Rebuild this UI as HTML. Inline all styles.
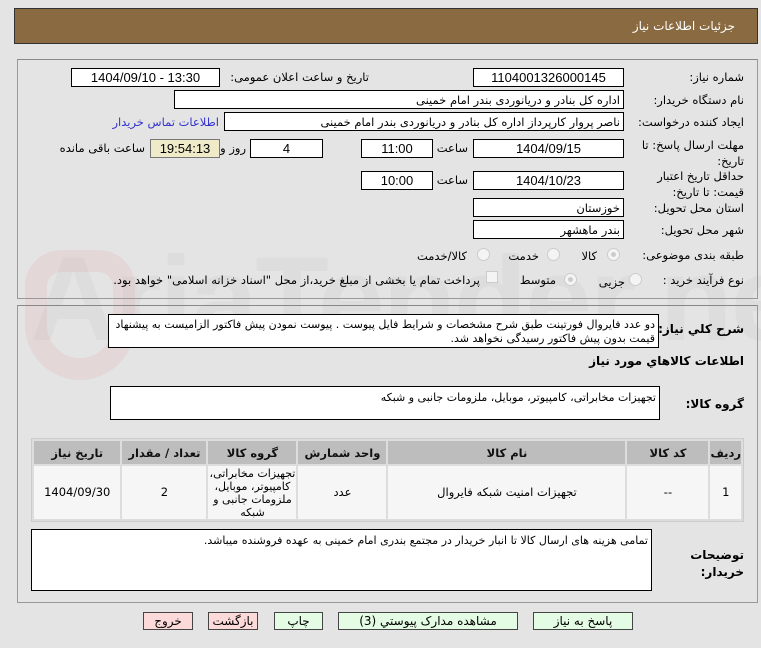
<!DOCTYPE html>
<html><head><meta charset="utf-8"><style>
*{box-sizing:border-box;margin:0;padding:0}
body{width:761px;height:648px;background:#e4e4e4;font-family:"DejaVu Sans","Noto Sans CJK SC",sans-serif;font-size:11.5px;color:#000;position:relative;overflow:hidden}
.a{position:absolute;white-space:nowrap}
.hd{left:14px;top:8px;width:744px;height:36px;background:#8a6a40;border:1px solid #333}
.hd span{position:absolute;right:22px;top:10px;color:#fff;font-size:12px}
.pn{position:absolute;border:1px solid #999;border-top-color:#888}
.in{position:absolute;background:#fff;border:1px solid #000;height:19px;text-align:center;line-height:17px;font-size:13px;font-family:"Liberation Sans",sans-serif}
.tx{position:absolute;background:#fff;border:1px solid #000;direction:rtl;text-align:right;padding:2px 3px;line-height:17px;font-size:11.5px}
.lb{position:absolute;direction:rtl;text-align:right;white-space:nowrap}
.rd{position:absolute;width:13px;height:13px;border-radius:50%;border:1px solid #ccc;background:#f4f4f4}
.rd.on::after{content:"";position:absolute;left:3px;top:3px;width:5px;height:5px;border-radius:50%;background:#ccc}
table{position:absolute;left:31px;top:438px;width:713px;height:84px;border-collapse:separate;border-spacing:2px;background:#ddd;border:1px solid #ccc;direction:rtl}
th{background:#bdbdbd;font-weight:bold;height:23px;font-size:11.5px;color:#111}
td{background:#f6f6f6;text-align:center;font-size:11.5px;line-height:13px}
.bt{position:absolute;top:612px;height:18px;border:1px solid #444;text-align:center;line-height:16px;font-size:12px;direction:rtl}
.b{font-weight:bold}
</style></head><body>
<div class="a" style="left:30px;top:230px;font-size:120px;font-weight:bold;color:rgba(190,190,190,0.18);font-family:'Liberation Sans',sans-serif;letter-spacing:-2px">AriaTender.net</div>
<div class="a" style="left:25px;top:250px;width:110px;height:130px;border:22px solid rgba(220,140,140,0.15);border-radius:40px 40px 60px 60px"></div>
<div class="hd a"><span>جزئیات اطلاعات نیاز</span></div>
<div class="pn" style="left:17px;top:59px;width:741px;height:240px"></div>
<div class="lb" style="right:17px;top:70px">شماره نیاز:</div>
<div class="in" style="left:473px;top:68px;width:151px">1104001326000145</div>
<div class="lb" style="right:392px;top:70px">تاریخ و ساعت اعلان عمومی:</div>
<div class="in" style="left:71px;top:68px;width:149px">1404/09/10 - 13:30</div>
<div class="lb" style="right:17px;top:93px">نام دستگاه خریدار:</div>
<div class="tx" style="left:174px;top:90px;width:450px;height:19px;line-height:14px">اداره کل بنادر و دریانوردی بندر امام خمینی</div>
<div class="lb" style="right:17px;top:115px">ایجاد کننده درخواست:</div>
<div class="tx" style="left:224px;top:112px;width:400px;height:19px;line-height:14px;overflow:hidden">ناصر پروار کارپرداز اداره کل بنادر و دریانوردی بندر امام خمینی</div>
<div class="lb" style="right:542px;top:115px;color:#3333cc">اطلاعات تماس خریدار</div>
<div class="lb" style="right:17px;top:137px;line-height:16px">مهلت ارسال پاسخ: تا<br>تاریخ:</div>
<div class="in" style="left:473px;top:139px;width:151px">1404/09/15</div>
<div class="lb" style="right:293px;top:141px">ساعت</div>
<div class="in" style="left:361px;top:139px;width:72px">11:00</div>
<div class="in" style="left:250px;top:139px;width:73px">4</div>
<div class="lb" style="right:515px;top:141px">روز و</div>
<div class="in" style="left:150px;top:139px;width:70px;background:#efebc9;border-color:#777">19:54:13</div>
<div class="lb" style="right:616px;top:141px">ساعت باقی مانده</div>
<div class="lb" style="right:17px;top:168px;line-height:16px">حداقل تاریخ اعتبار<br>قیمت: تا تاریخ:</div>
<div class="in" style="left:473px;top:171px;width:151px">1404/10/23</div>
<div class="lb" style="right:293px;top:173px">ساعت</div>
<div class="in" style="left:361px;top:171px;width:72px">10:00</div>
<div class="lb" style="right:17px;top:201px">استان محل تحویل:</div>
<div class="tx" style="left:473px;top:198px;width:151px;height:19px;line-height:14px">خوزستان</div>
<div class="lb" style="right:17px;top:223px">شهر محل تحویل:</div>
<div class="tx" style="left:473px;top:220px;width:151px;height:19px;line-height:14px">بندر ماهشهر</div>
<div class="lb" style="right:17px;top:248px">طبقه بندی موضوعی:</div>
<div class="rd on" style="left:607px;top:248px"></div><div class="lb" style="right:164px;top:249px">کالا</div>
<div class="rd" style="left:547px;top:248px"></div><div class="lb" style="right:222px;top:249px">خدمت</div>
<div class="rd" style="left:477px;top:248px"></div><div class="lb" style="right:294px;top:249px">کالا/خدمت</div>
<div class="lb" style="right:17px;top:273px">نوع فرآیند خرید :</div>
<div class="rd" style="left:629px;top:273px"></div><div class="lb" style="right:136px;top:275px">جزیی</div>
<div class="rd on" style="left:564px;top:273px"></div><div class="lb" style="right:205px;top:273px">متوسط</div>
<div class="a" style="left:486px;top:271px;width:12px;height:12px;border:1px solid #ccc;background:#f4f4f4"></div>
<div class="lb" style="right:281px;top:273px">پرداخت تمام یا بخشی از مبلغ خرید،از محل "اسناد خزانه اسلامی" خواهد بود.</div>

<div class="pn" style="left:17px;top:305px;width:741px;height:298px"></div>
<div class="lb b" style="right:17px;top:322px;font-size:12px">شرح كلي نياز:</div>
<div class="tx" style="left:108px;top:314px;width:551px;height:34px;line-height:14px;padding-top:3px;font-size:11px;white-space:normal">دو عدد فایروال فورتینت طبق شرح مشخصات و شرایط فایل پیوست . پیوست نمودن پیش فاکتور الزامیست به پیشنهاد قیمت بدون پیش فاکتور رسیدگی نخواهد شد.</div>
<div class="lb b" style="right:17px;top:354px;font-size:12px">اطلاعات كالاهاي مورد نياز</div>
<div class="lb b" style="right:17px;top:397px;font-size:12px">گروه کالا:</div>
<div class="tx" style="left:110px;top:386px;width:550px;height:34px;line-height:14px;padding-top:4px;font-size:11px">تجهیزات مخابراتی، کامپیوتر، موبایل، ملزومات جانبی و شبکه</div>
<table>
<tr><th style="width:27px">ردیف</th><th style="width:81px">کد کالا</th><th style="width:237px">نام کالا</th><th style="width:88px">واحد شمارش</th><th style="width:88px">گروه کالا</th><th style="width:84px">تعداد / مقدار</th><th>تاریخ نیاز</th></tr>
<tr><td>1</td><td>--</td><td>تجهیزات امنیت شبکه فایروال</td><td>عدد</td><td style="font-size:11px">تجهیزات مخابراتی، کامپیوتر، موبایل، ملزومات جانبی و شبکه</td><td>2</td><td>1404/09/30</td></tr>
</table>
<div class="lb b" style="right:17px;top:547px;font-size:12px;line-height:17px">توضیحات<br>خریدار:</div>
<div class="tx" style="left:31px;top:529px;width:621px;height:62px;line-height:14px;padding-top:4px;font-size:11px">تمامی هزینه های ارسال کالا تا انبار خریدار در مجتمع بندری امام خمینی به عهده فروشنده میباشد.</div>

<div class="bt" style="left:533px;width:100px;background:#e4fbe4">پاسخ به نیاز</div>
<div class="bt" style="left:338px;width:180px;background:#e4fbe4">مشاهده مدارک پیوستي (3)</div>
<div class="bt" style="left:274px;width:49px;background:#e4fbe4">چاپ</div>
<div class="bt" style="left:208px;width:50px;background:#fcdada">بازگشت</div>
<div class="bt" style="left:143px;width:50px;background:#fcdada">خروج</div>
</body></html>
